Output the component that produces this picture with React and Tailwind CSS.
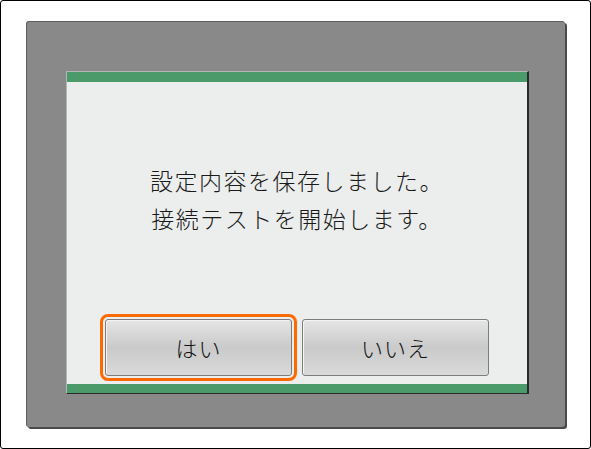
import React from 'react';

const jp = { fontFamily: '"Noto Sans CJK JP", "Noto Sans", sans-serif' };

const Boton = ({ texto, activo }) => (
  <button
    style={jp}
    className={`flex-1 h-[57px] rounded-[3px] border border-[#7c7c7c] bg-gradient-to-b from-[#e4e5e4] via-[#c9cac9] to-[#d9dad9] shadow-[inset_1px_1px_0_#f4f4f4] text-[22px] font-light tracking-[1px] text-[#111] flex items-center justify-center ${
      activo ? 'outline-[3px] outline-solid outline-[#ff6a00] outline-offset-[2px]' : ''
    }`}
  >
    {texto}
  </button>
);

export default function App() {
  return (
    <div className="w-[591px] h-[449px] bg-white border border-black rounded-[3px] pl-[25px] pt-[20px]">
      {/* Panel gris */}
      <div className="w-[539px] h-[406px] bg-[#898989] border-l border-t border-[#5e5e5e] rounded-[3px] shadow-[2px_2px_0_#4a4a4a] pl-[39px] pt-[49px]">
        {/* Diálogo */}
        <div className="w-[463px] h-[323px] bg-[#eceeed] border-l border-t border-[#b5b5b5] border-r-2 border-b border-r-[#2a2a2a] border-b-[#2a2a2a] flex flex-col">
          <div className="h-[10px] bg-[#4a9a6a]" />
          <div
            style={jp}
            className="flex-1 flex flex-col items-center justify-start pt-[79px] text-[23px] font-light leading-[38px] tracking-[1.5px] text-[#1a1a1a]"
          >
            <p>設定内容を保存しました。</p>
            <p>接続テストを開始します。</p>
          </div>
          <div className="flex gap-[10px] px-[38px] pb-[8px]">
            <Boton texto="はい" activo />
            <Boton texto="いいえ" />
          </div>
          <div className="h-[9px] bg-[#4a9a6a]" />
        </div>
      </div>
    </div>
  );
}
